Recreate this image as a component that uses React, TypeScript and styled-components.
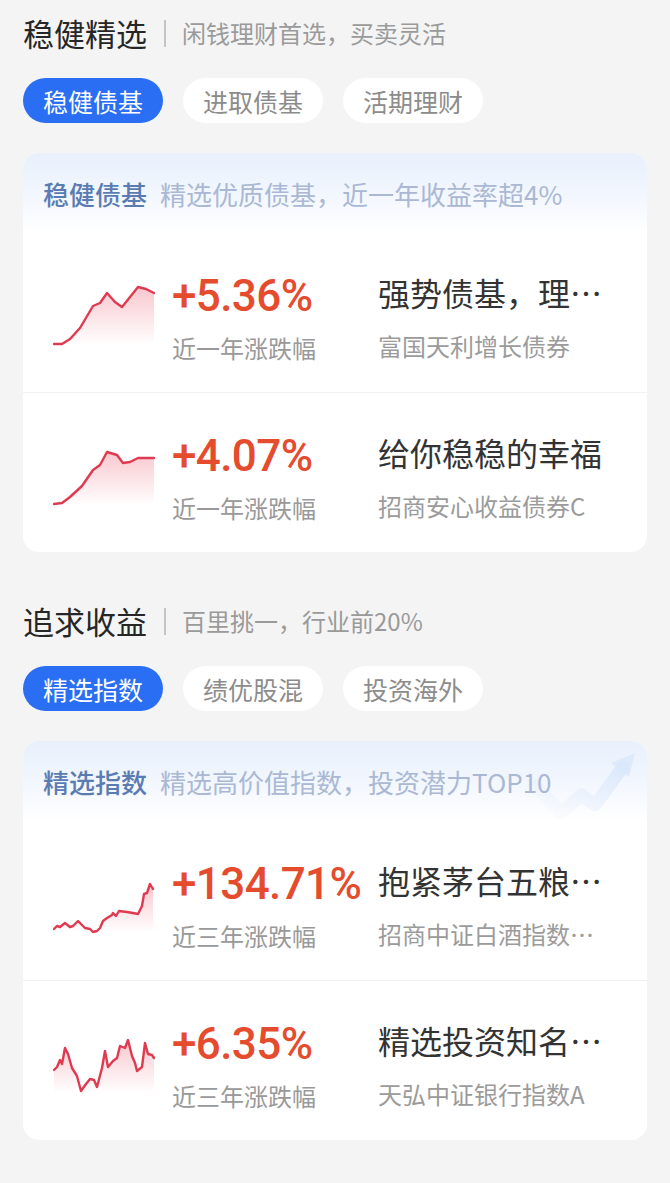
import React from "react";
import styled, { createGlobalStyle } from "styled-components";

const Global = createGlobalStyle`
  html, body { margin: 0; padding: 0; background: #f4f4f4; }
  body { font-family: "Noto Sans CJK SC", "Noto Sans", sans-serif; }
  * { box-sizing: border-box; }
`;

const Page = styled.div`
  display: flex;
  flex-direction: column;
  gap: 51px;
  padding: 15px 23px 40px;
  background: #f4f4f4;
  min-height: 1183px;
`;

const Section = styled.section`
  display: flex;
  flex-direction: column;
`;

const TitleRow = styled.div`
  display: flex;
  align-items: center;
  height: 36px;
`;

const Title = styled.h2`
  margin: 0;
  font-size: 31px;
  font-weight: 400;
  color: #262626;
  line-height: 36px;
`;

const VLine = styled.span`
  width: 2px;
  height: 27px;
  background: #c4c4c4;
  margin: 0 16px 0 17px;
`;

const Subtitle = styled.span`
  font-size: 24px;
  color: #9a9a9a;
  line-height: 36px;
`;

const Tabs = styled.div`
  display: flex;
  gap: 20px;
  margin-top: 27px;
`;

const Tab = styled.div<{ $active?: boolean }>`
  height: 45px;
  width: 140px;
  border-radius: 23px;
  display: flex;
  align-items: center;
  justify-content: center;
  font-size: 25px;
  background: ${(p) => (p.$active ? "#2a6ef3" : "#ffffff")};
  color: ${(p) => (p.$active ? "#ffffff" : "#8c8c8c")};
`;

const Card = styled.div`
  margin-top: 30px;
  background: #ffffff;
  border-radius: 16px;
  overflow: hidden;
`;

const CardHeader = styled.div`
  position: relative;
  height: 80px;
  display: flex;
  align-items: center;
  padding: 0 20px;
  background: linear-gradient(180deg, #e8f0fc 0%, #f3f7fe 55%, #ffffff 100%);
`;

const HeaderName = styled.span`
  font-size: 26px;
  color: #5b7cb3;
  font-weight: 500;
  margin-right: 13px;
  position: relative;
  z-index: 1;
`;

const HeaderDesc = styled.span`
  font-size: 26px;
  color: #aab8d4;
  position: relative;
  z-index: 1;
`;

const Watermark = styled.svg`
  position: absolute;
  right: 6px;
  top: 4px;
`;

const Row = styled.div<{ $divided?: boolean }>`
  display: flex;
  padding: 39px 0 28px 30px;
  border-top: ${(p) => (p.$divided ? "1px solid #f1f1f1" : "none")};
`;

const ChartBox = styled.svg`
  flex: none;
  margin-top: 11px;
`;

const NumCol = styled.div`
  width: 206px;
  margin-left: 17px;
  display: flex;
  flex-direction: column;
`;

const Rate = styled.div`
  font-family: Roboto, "Noto Sans", sans-serif;
  font-size: 44px;
  line-height: 48px;
  color: #e54b2d;
  font-weight: 500;
  letter-spacing: -0.6px;
  white-space: nowrap;
`;

const RateLabel = styled.div`
  font-size: 24px;
  line-height: 32px;
  margin-top: 12px;
  color: #999999;
`;

const InfoCol = styled.div`
  width: 228px;
  display: flex;
  flex-direction: column;
`;

const FundTitle = styled.div`
  font-size: 32px;
  line-height: 40px;
  color: #333333;
  white-space: nowrap;
  overflow: hidden;
  text-overflow: ellipsis;
`;

const FundName = styled.div`
  font-size: 24px;
  line-height: 32px;
  margin-top: 18px;
  color: #9b9b9b;
  white-space: nowrap;
  overflow: hidden;
  text-overflow: ellipsis;
`;

type Fund = {
  pts: number[][];
  rate: string;
  label: string;
  title: string;
  name: string;
};

const Spark: React.FC<{ pts: number[][]; id: string }> = ({ pts, id }) => {
  const line = pts.map((p, i) => `${i ? "L" : "M"}${p[0]} ${p[1]}`).join(" ");
  const last = pts[pts.length - 1];
  const area = `${line} L${last[0]} 62 L${pts[0][0]} 62 Z`;
  return (
    <ChartBox width="102" height="64" viewBox="0 0 102 64">
      <defs>
        <linearGradient id={id} x1="0" y1="0" x2="0" y2="1">
          <stop offset="0%" stopColor="#e8455c" stopOpacity="0.3" />
          <stop offset="100%" stopColor="#e8455c" stopOpacity="0" />
        </linearGradient>
      </defs>
      <path d={area} fill={`url(#${id})`} />
      <path d={line} fill="none" stroke="#df3a50" strokeWidth="2.4" strokeLinejoin="round" strokeLinecap="round" />
    </ChartBox>
  );
};

const sec1: Fund[] = [
  {
    pts: [[1,61],[9,61],[17,56],[27,45],[40,23],[47,20],[54,10],[62,19],[69,24],[77,14],[85,4],[93,6],[101,10]],
    rate: "+5.36%",
    label: "近一年涨跌幅",
    title: "强势债基，理财优选",
    name: "富国天利增长债券",
  },
  {
    pts: [[1,61],[9,60],[17,54],[29,43],[40,27],[47,22],[54,9],[64,12],[70,20],[77,19],[85,15],[94,15],[101,15]],
    rate: "+4.07%",
    label: "近一年涨跌幅",
    title: "给你稳稳的幸福",
    name: "招商安心收益债券C",
  },
];

const sec2: Fund[] = [
  {
    pts: [[1,58],[4,55],[7,56],[12,52],[17,56],[20,55],[25,50],[28,53],[32,57],[37,58],[40,61],[44,60],[47,57],[50,50],[54,47],[59,44],[60,42],[63,45],[66,40],[74,41],[80,42],[85,43],[89,35],[91,23],[94,22],[97,13],[100,18]],
    rate: "+134.71%",
    label: "近三年涨跌幅",
    title: "抱紧茅台五粮液龙头",
    name: "招商中证白酒指数分级",
  },
  {
    pts: [[1,39],[4,36],[7,29],[9,33],[12,17],[15,23],[19,37],[24,45],[28,60],[33,53],[37,48],[41,49],[44,56],[49,37],[52,20],[55,36],[60,30],[64,27],[67,15],[72,17],[75,9],[79,25],[82,32],[84,40],[89,36],[92,12],[95,23],[99,24],[101,27]],
    rate: "+6.35%",
    label: "近三年涨跌幅",
    title: "精选投资知名银行",
    name: "天弘中证银行指数A",
  },
];

const Check = () => (
  <Watermark width="120" height="80" viewBox="0 0 120 80">
    <defs>
      <linearGradient id="wm" x1="0" y1="1" x2="1" y2="0">
        <stop offset="0%" stopColor="#e6eefc" stopOpacity="0.1" />
        <stop offset="100%" stopColor="#d6e5fa" stopOpacity="0.8" />
      </linearGradient>
    </defs>
    <path d="M14 40 L40 68 L60 50 L74 60 L102 22" fill="none" stroke="url(#wm)" strokeWidth="13" strokeLinejoin="round" strokeLinecap="round" />
    <path d="M90 18 L114 8 L108 32 Z" fill="#d9e7fb" opacity="0.8" />
  </Watermark>
);

const FundRow: React.FC<{ f: Fund; idx: string; divided?: boolean }> = ({ f, idx, divided }) => (
  <Row $divided={divided}>
    <Spark pts={f.pts} id={`g${idx}`} />
    <NumCol>
      <Rate>{f.rate}</Rate>
      <RateLabel>{f.label}</RateLabel>
    </NumCol>
    <InfoCol>
      <FundTitle>{f.title}</FundTitle>
      <FundName>{f.name}</FundName>
    </InfoCol>
  </Row>
);

const Block: React.FC<{
  title: string;
  sub: string;
  tabs: string[];
  head: string;
  desc: string;
  funds: Fund[];
  k: string;
  mark?: boolean;
}> = ({ title, sub, tabs, head, desc, funds, k, mark }) => (
  <Section>
    <TitleRow>
      <Title>{title}</Title>
      <VLine />
      <Subtitle>{sub}</Subtitle>
    </TitleRow>
    <Tabs>
      {tabs.map((t, i) => (
        <Tab key={t} $active={i === 0}>
          {t}
        </Tab>
      ))}
    </Tabs>
    <Card>
      <CardHeader>
        {mark && <Check />}
        <HeaderName>{head}</HeaderName>
        <HeaderDesc>{desc}</HeaderDesc>
      </CardHeader>
      {funds.map((f, i) => (
        <FundRow key={f.rate} f={f} idx={`${k}${i}`} divided={i > 0} />
      ))}
    </Card>
  </Section>
);

export default function App() {
  return (
    <>
      <Global />
      <Page>
        <Block
          k="a"
          title="稳健精选"
          sub="闲钱理财首选，买卖灵活"
          tabs={["稳健债基", "进取债基", "活期理财"]}
          head="稳健债基"
          desc="精选优质债基，近一年收益率超4%"
          funds={sec1}
        />
        <Block
          k="b"
          mark
          title="追求收益"
          sub="百里挑一，行业前20%"
          tabs={["精选指数", "绩优股混", "投资海外"]}
          head="精选指数"
          desc="精选高价值指数，投资潜力TOP10"
          funds={sec2}
        />
      </Page>
    </>
  );
}
